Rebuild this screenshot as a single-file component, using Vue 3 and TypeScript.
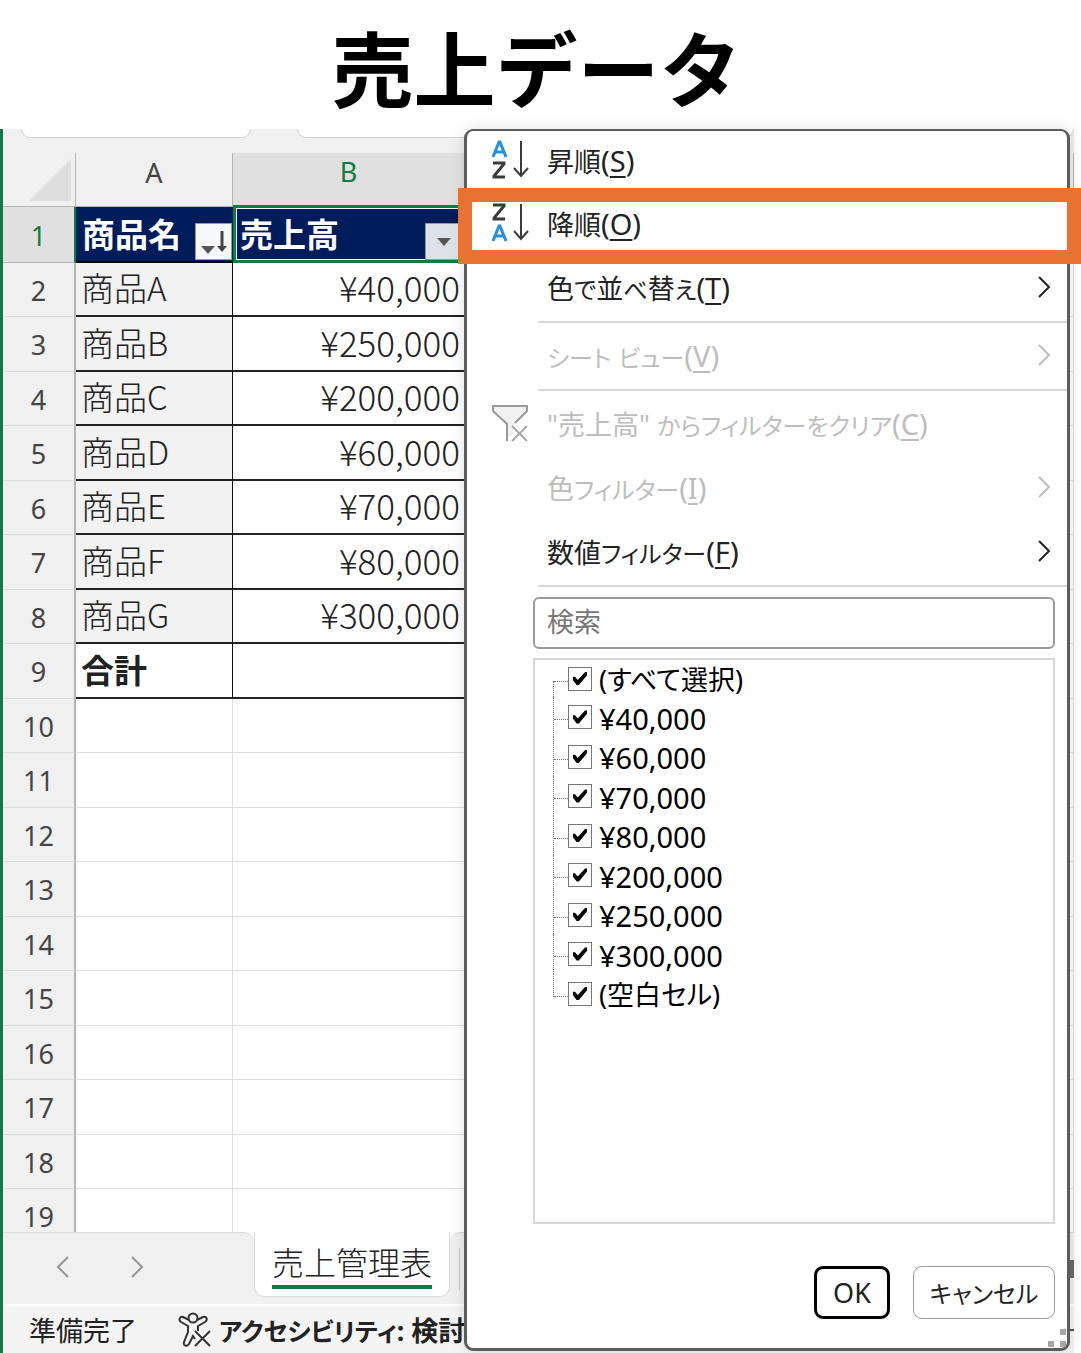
<script setup lang="ts">
import { ref } from 'vue'

interface Row {
  n: number
  name: string
  amount: string
  kind: 'data' | 'total' | 'empty'
}

const products: [string, string][] = [
  ['商品A', '¥40,000'],
  ['商品B', '¥250,000'],
  ['商品C', '¥200,000'],
  ['商品D', '¥60,000'],
  ['商品E', '¥70,000'],
  ['商品F', '¥80,000'],
  ['商品G', '¥300,000'],
]

const rows: Row[] = [
  ...products.map(([name, amount], i): Row => ({ n: i + 2, name, amount, kind: 'data' })),
  { n: 9, name: '合計', amount: '', kind: 'total' },
  ...Array.from({ length: 10 }, (_, i): Row => ({ n: i + 10, name: '', amount: '', kind: 'empty' })),
]

interface Item {
  label: string
  key: string
  icon?: 'asc' | 'desc' | 'clear'
  sub?: boolean
  disabled?: boolean
  divider?: boolean
}

const items: Item[] = [
  { label: '昇順', key: 'S', icon: 'asc' },
  { label: '降順', key: 'O', icon: 'desc' },
  { label: '色で並べ替え', key: 'T', sub: true, divider: true },
  { label: 'シート ビュー', key: 'V', sub: true, disabled: true, divider: true },
  { label: '"売上高" からフィルターをクリア', key: 'C', icon: 'clear', disabled: true },
  { label: '色フィルター', key: 'I', sub: true, disabled: true },
  { label: '数値フィルター', key: 'F', sub: true, divider: true },
]

// Splits a label into runs so that kana can be set smaller than kanji.
const runs = (text: string) =>
  text
    .split(/([\u3040-\u30ff]+)/)
    .filter(Boolean)
    .map((part) => ({ part, kana: /^[\u3040-\u30ff]/.test(part) }))

const query = ref('')
const options = ref(
  ['(すべて選択)', '¥40,000', '¥60,000', '¥70,000', '¥80,000', '¥200,000', '¥250,000', '¥300,000', '(空白セル)'].map(
    (label) => ({ label, checked: true }),
  ),
)
</script>

<template>
  <div class="page">
    <h1 class="title">売上データ</h1>
    <main class="stage">
      <div class="workbook">
        <div class="formula-bar">
          <div class="name-box"></div>
          <div class="formula-box"></div>
        </div>

        <div class="sheet">
          <table>
            <colgroup>
              <col class="col-num" />
              <col class="col-a" />
              <col class="col-b" />
              <col />
            </colgroup>
            <thead>
              <tr>
                <th class="corner">
                  <svg width="42" height="42" viewBox="0 0 42 42"><path d="M42 0V42H0Z" fill="#dedede" /></svg>
                </th>
                <th class="letter" scope="col">A</th>
                <th class="letter active" scope="col">B</th>
                <th class="letter"></th>
              </tr>
            </thead>
            <tbody>
              <tr>
                <th class="num active" scope="row">1</th>
                <td class="head">
                  <div class="head-cell">
                    <span>商品名</span>
                    <button class="filter sorted" type="button" aria-label="商品名のフィルター">
                      <svg width="36" height="36" viewBox="0 0 36 36">
                        <path d="M5 22H19L12 30Z" fill="#555" />
                        <path d="M26 7V24" stroke="#444" stroke-width="3" />
                        <path d="M21 22H31L26 28Z" fill="#444" />
                      </svg>
                    </button>
                  </div>
                </td>
                <td class="head selected">
                  <div class="head-cell">
                    <span>売上高</span>
                    <button class="filter" type="button" aria-label="売上高のフィルター">
                      <svg width="36" height="36" viewBox="0 0 36 36"><path d="M11 14H25L18 22Z" fill="#555" /></svg>
                    </button>
                  </div>
                </td>
                <td></td>
              </tr>
              <tr v-for="row in rows" :key="row.n" :class="row.kind">
                <th class="num" scope="row">{{ row.n }}</th>
                <td class="name">{{ row.name }}</td>
                <td class="amount">{{ row.amount }}</td>
                <td></td>
              </tr>
            </tbody>
          </table>
        </div>

        <div class="tabs">
          <div class="tabs-nav">
            <button type="button" aria-label="前のシート">
              <svg width="14" height="24" viewBox="0 0 14 24"><path d="M12 2L2 12L12 22" /></svg>
            </button>
            <button type="button" aria-label="次のシート">
              <svg width="14" height="24" viewBox="0 0 14 24"><path d="M2 2L12 12L2 22" /></svg>
            </button>
          </div>
          <button class="tab" type="button"><span>売上管理表</span></button>
          <div class="tabs-rest">
            <i class="tab-divider"></i>
            <i class="scroll-thumb"></i>
          </div>
        </div>

        <footer class="status">
          <span>準備完了</span>
          <svg class="access" width="34" height="36" viewBox="0 0 34 36">
            <circle cx="15" cy="6" r="4.5" />
            <path d="M11 8L5 5C2 4 0 8 3 10L10 14V20L6 30C5 34 9 35 11 32L15 24L17 27" />
            <path d="M19 8L25 5C29 4 30 8 27 10L20 14V19" />
            <path d="M17 19L32 34M32 19L17 34" />
          </svg>
          <b><span class="kana">アクセシビリティ</span>: 検討</b>
          <i class="zoom-line"></i>
        </footer>
      </div>

      <section class="menu" aria-label="フィルター">
        <template v-for="item in items" :key="item.key">
          <button class="item" type="button" :disabled="item.disabled">
            <span class="icon">
              <svg v-if="item.icon === 'asc' || item.icon === 'desc'" width="38" height="40" viewBox="0 0 38 40">
                <g :transform="item.icon === 'asc' ? 'translate(0 0)' : 'translate(0 21)'" stroke="#2490d8">
                  <path d="M2 17L8 2H9L15 17M4 12H13" />
                </g>
                <g :transform="item.icon === 'asc' ? 'translate(0 21)' : 'translate(0 0)'" stroke="#3b3b3b">
                  <path d="M2 2H13V3L3 15V16H14" />
                </g>
                <path class="thin" d="M30 1V36M23 28L30 36L37 28" stroke="#3b3b3b" />
              </svg>
              <svg v-else-if="item.icon === 'clear'" width="38" height="38" viewBox="0 0 38 38">
                <path d="M2 2H36V7L24 19L22 30L15 36V20L2 7Z" fill="#f1f1f1" stroke="none" />
                <path class="thin" d="M16 37V20L2 7V2H36V7L24 19" stroke="#9a9a9a" />
                <path class="thin" d="M21 22L36 37M36 22L21 37" stroke="#a8a8a8" />
              </svg>
            </span>
            <span class="label"><span v-for="run in runs(item.label)" :key="run.part" :class="{ kana: run.kana }">{{ run.part }}</span><span class="key">(<u>{{ item.key }}</u>)</span></span>
            <svg v-if="item.sub" class="chevron" width="14" height="24" viewBox="0 0 14 24">
              <path d="M2 2L12 12L2 22" />
            </svg>
          </button>
          <hr v-if="item.divider" />
        </template>

        <div class="panel">
          <input v-model="query" class="search" type="text" placeholder="検索" aria-label="検索" />
          <ul class="options">
            <li v-for="(option, i) in options" :key="option.label">
              <span class="branch"></span>
              <input :id="`option-${i}`" v-model="option.checked" type="checkbox" />
              <label :for="`option-${i}`" :class="{ yen: option.label.startsWith('¥') }">{{ option.label }}</label>
            </li>
          </ul>
          <div class="actions">
            <button class="ok" type="button">OK</button>
            <button class="cancel kana" type="button">キャンセル</button>
          </div>
        </div>
        <svg class="grip" width="18" height="18" viewBox="0 0 18 18">
          <path d="M12 0H18V6H12ZM0 12H6V18H0ZM12 12H18V18H12Z" fill="#a6a6a6" />
        </svg>
      </section>

      <div class="highlight"></div>
    </main>
  </div>
</template>

<style>
body {
  background: #fff;
}
</style>

<style scoped>
* {
  box-sizing: border-box;
}

.page {
  display: flex;
  flex-direction: column;
  height: 100vh;
  overflow: hidden;
  font-family: 'Noto Sans', 'Noto Sans CJK JP', sans-serif;
  font-size: 27px;
  color: #222;
}

button,
input {
  font: inherit;
  color: inherit;
}

button {
  padding: 0;
  border: 0;
  background: none;
}

.kana {
  font-size: 24px;
}

.title {
  flex: none;
  height: 129px;
  margin: 0;
  padding-right: 8px;
  font-family: 'Noto Sans CJK JP', sans-serif;
  font-size: 82px;
  font-weight: 700;
  line-height: 132px;
  text-align: center;
  color: #000;
}

.stage {
  position: relative;
  flex: 1;
  min-height: 0;
}

.workbook {
  display: flex;
  flex-direction: column;
  height: 100%;
  margin-right: 7px;
  border-left: 3px solid #107c41;
  overflow: hidden;
}

.formula-bar {
  display: flex;
  flex: none;
  gap: 46px;
  height: 24px;
  padding-left: 18px;
  background: #f0f0f0;
}

.name-box,
.formula-box {
  height: 9px;
  background: #fff;
  border: 1px solid #d0d0d0;
  border-top: 0;
  border-radius: 0 0 9px 9px;
}

.name-box {
  width: 230px;
}

.formula-box {
  flex: 1;
}

.sheet {
  flex: 1;
  min-height: 0;
  overflow: hidden;
}

table {
  width: 100%;
  table-layout: fixed;
  border-collapse: separate;
  border-spacing: 0;
}

.col-num {
  width: 73px;
}

.col-a {
  width: 157px;
}

.col-b {
  width: 232px;
}

th,
td {
  padding: 0;
  font-weight: 400;
  line-height: 36px;
}

thead tr,
tbody tr:nth-child(even) {
  height: 54px;
}

tbody tr:nth-child(odd) {
  height: 55px;
}

td {
  border-right: 1px solid #dedede;
  border-bottom: 1px solid #dedede;
}

.corner,
.letter {
  background: #f0f0f0;
  border-bottom: 1px solid #b5b5b5;
  border-right: 1px solid #b5b5b5;
}

.corner {
  padding-right: 4px;
  text-align: right;
}

.corner svg {
  display: block;
  margin-left: auto;
}

.letter {
  padding-bottom: 14px;
  color: #444;
}

.letter.active {
  background: #e0e0e0;
  border-bottom: 2px solid #107c41;
  color: #107c41;
}

.num {
  padding-top: 2px;
  background: #f0f0f0;
  border-right: 2px solid #b5b5b5;
  border-bottom: 1px solid #dadada;
  color: #444;
}

.num.active {
  background: #e0e0e0;
  border-right: 2px solid #107c41;
  border-bottom-color: #b5b5b5;
  color: #107c41;
}

.head {
  height: 55px;
  background: #001c5b;
  border-right: 0;
  border-bottom: 2px solid #000;
  color: #fff;
  font-family: 'Noto Sans CJK JP', sans-serif;
  font-size: 33px;
  font-weight: 700;
}

.head.selected {
  border: 3px solid #107c41;
  border-top-width: 1px;
  box-shadow: inset 0 0 0 1px #fff;
}

.head-cell {
  display: flex;
  align-items: flex-end;
  justify-content: space-between;
  height: 52px;
  padding: 0 1px 0 6px;
}

.head-cell > span {
  align-self: center;
  padding-bottom: 2px;
}

.selected .head-cell {
  padding: 0 0 0 4px;
}

.filter {
  width: 37px;
  height: 37px;
  background: #dde1e8;
  border: 1px solid #999;
}

.filter svg {
  display: block;
}

.filter.sorted {
  background: #f7f8fa;
}

.name,
.amount {
  padding-bottom: 4px;
  font-family: 'Noto Sans CJK JP', sans-serif;
  font-size: 33px;
  font-weight: 300;
}

.name {
  padding-left: 5px;
}

.amount {
  padding-right: 4px;
  font-size: 35px;
  text-align: right;
}

.data .name,
.data .amount,
.total .name,
.total .amount {
  border-right: 1px solid #111;
  border-bottom: 2px solid #222;
}

.data .name {
  background: #f2f2f2;
}

.total .name {
  font-weight: 700;
}

.tabs {
  display: flex;
  flex: none;
  height: 72px;
  background: linear-gradient(#fff 20px, #f0f0f0 20px);
}

.tabs-nav {
  display: flex;
  align-items: center;
  gap: 60px;
  width: 251px;
  padding-left: 53px;
  padding-bottom: 4px;
  background: #f0f0f0;
  border-top: 1px solid #d9d9d9;
  border-radius: 0 10px 0 0;
}

.tabs-nav svg {
  display: block;
  fill: none;
  stroke: #959595;
  stroke-width: 2;
}

.tab {
  width: 196px;
  height: 65px;
  background: #fff;
  border: 1px solid #d9d9d9;
  border-top: 0;
  border-radius: 0 0 10px 10px;
  font-family: 'Noto Sans CJK JP', sans-serif;
  font-size: 32px;
  font-weight: 300;
  line-height: 42px;
}

.tab span {
  display: inline-block;
  padding-bottom: 3px;
  border-bottom: 4px solid #107c41;
}

.tabs-rest {
  display: flex;
  flex: 1;
  align-items: center;
  justify-content: space-between;
  padding-left: 9px;
  background: #f0f0f0;
  border-top: 1px solid #d9d9d9;
  border-radius: 10px 0 0 0;
}

.tab-divider {
  width: 1px;
  height: 42px;
  background: #c4c4c4;
}

.scroll-thumb {
  width: 20px;
  height: 18px;
  background: #6b6b6b;
}

.status {
  display: flex;
  flex: none;
  align-items: center;
  height: 49px;
  padding-left: 26px;
  background: #f4f4f4;
  border-top: 2px solid #fff;
  font-feature-settings: 'palt';
  white-space: nowrap;
}

.status .kana {
  font-size: 25px;
}

.access {
  flex: none;
  margin: 0 7px 0 41px;
  fill: none;
  stroke: #333;
  stroke-width: 2;
}

.zoom-line {
  width: 40px;
  height: 2px;
  margin-left: auto;
  background: #555;
}

.menu {
  position: absolute;
  top: 0;
  right: 11px;
  bottom: 2px;
  left: 464px;
  display: flex;
  flex-direction: column;
  background: #fff;
  border: 3px solid #5c5c5c;
  border-top-width: 2px;
  border-radius: 9px;
  box-shadow: 0 0 16px rgba(0, 0, 0, 0.12);
  font-feature-settings: 'palt';
}

.item {
  display: flex;
  flex: none;
  align-items: center;
  height: 64px;
  padding: 0 16px 5px 24px;
  text-align: left;
}

.item:first-child {
  height: 62px;
}

.item:disabled {
  color: #bdbdbd;
}

.icon {
  width: 56px;
}

.icon svg {
  display: block;
  fill: none;
  stroke-width: 3;
}

.icon .thin {
  stroke-width: 2;
}

.label {
  flex: 1;
  padding-top: 4px;
  line-height: 40px;
}

.key {
  font-size: 29px;
}

.label u {
  text-decoration-thickness: 2px;
  text-underline-offset: 4px;
}

.chevron {
  fill: none;
  stroke: currentColor;
  stroke-width: 2;
}

hr {
  flex: none;
  width: auto;
  height: 2px;
  margin: 0 0 2px 71px;
  border: 0;
  background: #d6d6d6;
}

.panel {
  display: flex;
  flex: 1;
  flex-direction: column;
  min-height: 0;
  padding: 8px 12px 29px 66px;
}

.search {
  flex: none;
  width: 100%;
  height: 52px;
  padding: 0 12px 4px;
  border: 2px solid #9a9a9a;
  border-radius: 6px;
  background: #fff;
}

.search::placeholder {
  color: #777;
  opacity: 1;
}

.options {
  flex: 1;
  min-height: 0;
  margin: 9px 0 42px;
  padding: 0 0 0 18px;
  border: 2px solid #d6d6d6;
  list-style: none;
  overflow: hidden;
  color: #000;
}

.options li {
  display: flex;
  align-items: center;
  height: 39px;
}

.options li:nth-child(even) {
  height: 40px;
}

.options li:first-child {
  height: 37px;
}

.branch {
  align-self: stretch;
  width: 15px;
  border-left: 1px dotted #777;
}

.branch::after {
  content: '';
  display: block;
  margin-top: 22px;
  border-top: 1px dotted #777;
}

.options li:first-child .branch {
  margin-top: 21px;
}

.options li:first-child .branch::after {
  margin-top: 0;
}

.options li:last-child .branch {
  height: 23px;
  align-self: flex-start;
}

.options input {
  appearance: none;
  width: 24px;
  height: 24px;
  margin: 0 7px 0 0;
  background: #fff;
  border: 1px solid #777;
}

.options input:checked::before {
  content: '';
  display: block;
  width: 14px;
  height: 14px;
  margin: 4px;
  background: #000;
  clip-path: polygon(0 38%, 14% 38%, 34% 60%, 86% 4%, 100% 4%, 100% 26%, 42% 96%, 26% 96%, 0 62%);
}

.options label {
  padding-top: 3px;
  line-height: 36px;
}

.options .yen {
  font-size: 29px;
}

.actions {
  display: flex;
  flex: none;
  justify-content: flex-end;
  gap: 23px;
}

.actions button {
  height: 53px;
  border-radius: 9px;
}

.ok {
  width: 76px;
  border: 3px solid #000;
}

.cancel {
  width: 142px;
  border: 1px solid #999;
}

.grip {
  position: absolute;
  right: 1px;
  bottom: 1px;
}

.highlight {
  position: absolute;
  top: 59px;
  right: 0;
  left: 458px;
  height: 76px;
  border: 14px solid #e97132;
  pointer-events: none;
}
</style>
